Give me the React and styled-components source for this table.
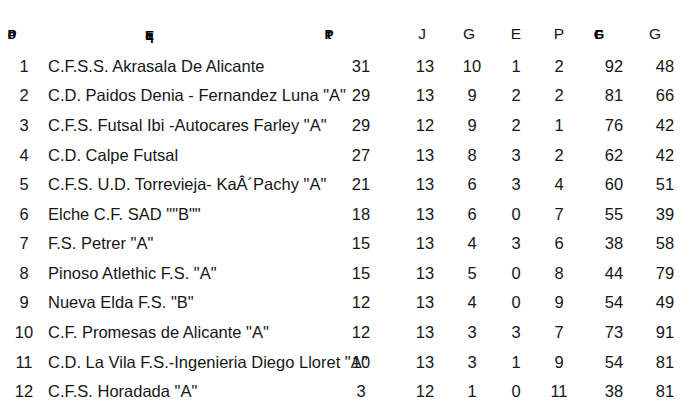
import React from "react";
import styled, { createGlobalStyle } from "styled-components";

const GlobalStyle = createGlobalStyle`
  html, body {
    margin: 0;
    padding: 0;
    background: #ffffff;
  }
  body {
    font-family: "Liberation Sans", Arial, sans-serif;
    color: #161616;
  }
`;

const teams = [
  [1, "C.F.S.S. Akrasala De Alicante", 31, 13, 10, 1, 2, 92, 48],
  [2, 'C.D. Paidos Denia - Fernandez Luna "A"', 29, 13, 9, 2, 2, 81, 66],
  [3, 'C.F.S. Futsal Ibi -Autocares Farley "A"', 29, 12, 9, 2, 1, 76, 42],
  [4, "C.D. Calpe Futsal", 27, 13, 8, 3, 2, 62, 42],
  [5, 'C.F.S. U.D. Torrevieja- KaÂ´Pachy "A"', 21, 13, 6, 3, 4, 60, 51],
  [6, 'Elche C.F. SAD ""B""', 18, 13, 6, 0, 7, 55, 39],
  [7, 'F.S. Petrer "A"', 15, 13, 4, 3, 6, 38, 58],
  [8, 'Pinoso Atlethic F.S. "A"', 15, 13, 5, 0, 8, 44, 79],
  [9, 'Nueva Elda F.S. "B"', 12, 13, 4, 0, 9, 54, 49],
  [10, 'C.F. Promesas de Alicante "A"', 12, 13, 3, 3, 7, 73, 91],
  [11, 'C.D. La Vila F.S.-Ingenieria Diego Lloret "A"', 10, 13, 3, 1, 9, 54, 81],
  [12, 'C.F.S. Horadada "A"', 3, 12, 1, 0, 11, 38, 81],
];

// column tracks: pos, team, pts, j, g, e, p, gf, gc
const Table = styled.div`
  width: 700px;
  padding-top: 19px;
`;

const Row = styled.div`
  display: grid;
  grid-template-columns: 48px 271px 84px 44px 50px 38px 48px 62px 40px;
  height: ${(p) => (p.$head ? "30px" : "29.6px")};
  margin-bottom: ${(p) => (p.$head ? "2.2px" : "0")};
  align-items: center;
  font-size: 16.5px;
  line-height: 1;
`;

const Cell = styled.div`
  text-align: center;
  white-space: nowrap;
`;

const TeamCell = styled.div`
  text-align: left;
  white-space: nowrap;
  overflow: visible;
`;

const HeadCell = styled.div`
  text-align: center;
  white-space: nowrap;
  font-size: 15.5px;
  padding-right: ${(p) => (p.$shift || 0) * 2}px;
`;

const TeamHead = styled.div`
  text-align: left;
  padding-left: 97px;
`;

const Stack = styled.span`
  display: inline-grid;
  font-size: 13.5px;
  font-weight: bold;
  line-height: 1;
  color: #000;
  & > span {
    grid-area: 1 / 1;
    justify-self: center;
  }
`;

const Overlap = ({ chars }) => (
  <Stack>
    {chars.split("").map((c, i) => (
      <span key={i}>{c}</span>
    ))}
  </Stack>
);

const App = () => {
  return (
    <>
      <GlobalStyle />
      <Table>
        <Row $head>
          <HeadCell $shift={12}>
            <Overlap chars="Po" />
          </HeadCell>
          <TeamHead>
            <Overlap chars="Eqi" />
          </TeamHead>
          <HeadCell $shift={32}>
            <Overlap chars="Pt" />
          </HeadCell>
          <HeadCell $shift={3}>J</HeadCell>
          <HeadCell $shift={3}>G</HeadCell>
          <HeadCell>E</HeadCell>
          <HeadCell>P</HeadCell>
          <HeadCell $shift={15}>
            <Overlap chars="GF" />
          </HeadCell>
          <HeadCell $shift={10}>G</HeadCell>
        </Row>
        {teams.map((t) => (
          <Row key={t[0]}>
            <Cell>{t[0]}</Cell>
            <TeamCell>{t[1]}</TeamCell>
            {t.slice(2).map((v, i) => (
              <Cell key={i}>{v}</Cell>
            ))}
          </Row>
        ))}
      </Table>
    </>
  );
};

export default App;
